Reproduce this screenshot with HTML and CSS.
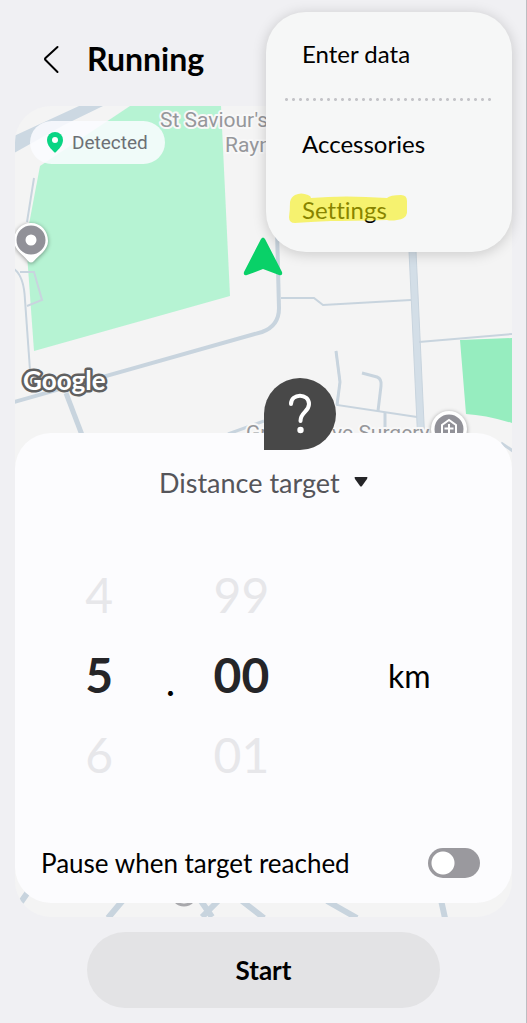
FILE: index.html
```html
<!DOCTYPE html>
<html lang="en">
<head>
    <meta charset="UTF-8">
    <meta name="viewport" content="width=device-width, initial-scale=1.0">
    <title>Running</title>
    <link rel="stylesheet" href="styles.css">
</head>
<body>
    <header class="header">
        <button class="back-button" aria-label="Back">
            <svg width="18" height="30" viewBox="0 0 18 30">
                <path d="M15.500 3L3.500 14Q2.500 15 3.500 16L15.500 28" fill="none" stroke="#000" stroke-width="2" stroke-linecap="round"/>
            </svg>
        </button>
        <h1>Running</h1>
    </header>

    <nav class="menu" aria-label="More options">
        <button class="menu-item">Enter data</button>
        <div class="menu-divider"></div>
        <button class="menu-item">Accessories</button>
        <button class="menu-item">Settings
            <svg class="highlight" width="118" height="32" viewBox="0 0 118 32">
                <path d="M6 2Q12 -1 19 2Q22 3 22 5Q55 2 98 5Q101 2 112 2Q118 2 118 8V20Q117 26 108 27Q102 28 98 27Q60 28 42 28Q20 29 6 30Q0 30 0 24Q1 17 1 9Q2 4 6 2Z" fill="#f5ee00" fill-opacity="0.55"/>
            </svg>
        </button>
    </nav>

    <main>
        <section class="map">
            <svg class="map-canvas" viewBox="15 106 497 811" preserveAspectRatio="xMidYMin slice">
                <rect x="14" y="106" width="498" height="811" fill="#f4f4f4"/>

                <!-- water / main road top left -->
                <path d="M14 136L79 106H103L64 125L14 153Z" fill="#ccd8e2"/>

                <!-- parks -->
                <path d="M130 106H221L230 296L34 351L26 240L40 166Z" fill="#b6f3d3"/>
                <path d="M460 340L512 338V423Q485 415 466 414Z" fill="#96edbf"/>

                <!-- roads -->
                <g fill="none" stroke="#c8d4de">
                    <path d="M34 178L27 222M14 269Q24 276 25 300L30 370" stroke-width="2"/>
                    <path d="M20 272H34L42 300L27 306" stroke-width="2"/>
                    <path d="M14 402L262 332Q279 326 279 308L277 230" stroke-width="4"/>
                    <path d="M66 393L82 435" stroke-width="5"/>
                    <path d="M412 240L421 434" stroke="#d3dee7" stroke-width="7"/>
                    <path d="M408.500 240L417.500 434M415.500 240L424.500 434" stroke-width="1"/>
                    <path d="M281 298H314L323 305L411 300" stroke-width="2"/>
                    <path d="M419 342L512 334" stroke-width="2"/>
                    <path d="M336 351L340 382L337 405L417 417" stroke-width="2"/>
                    <path d="M336 351L340 382L337 405" stroke-width="3"/>
                    <path d="M362 373L377 377Q382 379 381 386L378 411" stroke-width="3"/>
                    <path d="M385 412V434M228 434L264 421" stroke-width="3"/>
                    <path d="M501 443L513 451" stroke-width="3"/>
                    <path d="M21 902L28 892M108 918L124 899M201 901L212 917M202 917L220 899M242 901L264 918M327 901L357 918M441 900L445 918" stroke-width="6"/>
                </g>

                <!-- labels -->
                <g class="map-label">
                    <text x="160" y="127">St Saviour's</text>
                    <text x="225" y="152">Raynes</text>
                    <text x="246" y="440">Grove</text>
                    <text x="332" y="440">ve Surgery</text>
                </g>
                <text class="google" x="23" y="390">Google</text>

                <!-- place pins -->
                <path d="M31 223C21 223 14 231 14 241C14 250 24 255 28 261Q31 264 34 261C39 255 48 250 48 241C48 231 41 223 31 223Z" fill="#fff" class="pin-shadow"/>
                <circle cx="31" cy="240" r="10" fill="#fff" stroke="#919198" stroke-width="9"/>
                <circle cx="449" cy="429" r="18" fill="#fff" class="pin-shadow"/>
                <circle cx="449" cy="429" r="14.500" fill="#919198"/>
                <path d="M442 436V425L449 420L456 425V436ZM449 424V433M444.500 428.500H453.500" fill="none" stroke="#fff" stroke-width="2"/>
                <circle cx="184" cy="893" r="12" fill="#fff" stroke="#a8a8ac" stroke-width="3"/>

                <!-- current position -->
                <path d="M261 239Q263 236 265 239L282 272Q283 276 279 275L263 269L247 275Q243 276 244 272Z" fill="#09d168"/>
            </svg>

            <div class="status">
                <svg width="16" height="21" viewBox="0 0 16 21">
                    <path d="M8 0A8 8 0 0 0 0 8C0 13 4 17 7 20Q8 21 9 20C12 17 16 13 16 8A8 8 0 0 0 8 0Z" fill="#09d584"/>
                    <circle cx="8" cy="8" r="3" fill="#fff"/>
                </svg>
                Detected
            </div>

            <form class="sheet">
                <button type="button" class="help-button" aria-label="Help">
                    <svg width="24" height="42" viewBox="0 0 24 42">
                        <path d="M3 11C3 0 21 0 21 11C21 19 12.500 19 12.500 28" fill="none" stroke="#fff" stroke-width="4" stroke-linecap="round"/>
                        <circle cx="12.500" cy="37" r="3.200" fill="#fff"/>
                    </svg>
                </button>

                <div class="target">
                    <select class="target-select" aria-label="Target type">
                        <option>Distance target</option>
                    </select>
                    <svg width="14" height="10" viewBox="0 0 14 10">
                        <path d="M1 0H13Q14 0 13 2L8 9Q7 10 6 9L1 2Q0 0 1 0Z" fill="#252528"/>
                    </svg>
                </div>

                <div class="picker">
                    <div class="picker-column">
                        <button type="button" class="picker-option">4</button>
                        <output class="picker-value">5</output>
                        <button type="button" class="picker-option">6</button>
                    </div>
                    <span class="picker-point">.</span>
                    <div class="picker-column">
                        <button type="button" class="picker-option">99</button>
                        <output class="picker-value">00</output>
                        <button type="button" class="picker-option">01</button>
                    </div>
                    <span class="picker-unit">km</span>
                </div>

                <div class="pause">
                    <label for="pauseToggle">Pause when target reached</label>
                    <input type="checkbox" id="pauseToggle" class="toggle">
                </div>
            </form>
        </section>

        <button class="start-button">Start</button>
    </main>
</body>
</html>
```
FILE: styles.css
```css
* {
    box-sizing: border-box;
}

body {
    position: relative;
    margin: 0;
    min-height: 100vh;
    padding: 0 14px 15px 15px;
    background: #f0f0f3;
    border-right: 1px solid #bdbdc1;
    font-family: Lato, "Liberation Sans", sans-serif;
    font-size: 24px;
    font-variant-ligatures: none;
    color: #000;
}

button,
select {
    margin: 0;
    padding: 0;
    border: none;
    background: none;
    font: inherit;
    font-variant-ligatures: none;
    color: inherit;
    cursor: pointer;
}

.header {
    display: flex;
    align-items: center;
    gap: 27px;
    height: 106px;
    padding: 12px 0 0 27px;
}

.header h1 {
    margin: 0;
    font-size: 32px;
    line-height: 40px;
    font-weight: 700;
}

.back-button {
    display: flex;
}

/* Menu */
.menu {
    position: absolute;
    z-index: 2;
    top: 12px;
    right: 14px;
    display: flex;
    flex-direction: column;
    width: 246px;
    padding: 9px 0;
    border-radius: 40px;
    background: #f6f7f7;
    box-shadow: 0 2px 14px rgba(0, 0, 0, 0.18);
}

.menu-item {
    position: relative;
    padding-left: 36px;
    line-height: 66px;
    text-align: left;
}

.menu-divider {
    height: 3px;
    margin: 11px 17px 10px;
    background: radial-gradient(circle, #c4c4c8 1px, transparent 2px) 0 0 / 7px 3px;
}

.highlight {
    position: absolute;
    left: 23px;
    top: 16px;
}

/* Map */
.map {
    position: relative;
    display: flex;
    flex-direction: column;
    align-items: flex-start;
    padding: 15px 0 14px;
    border-radius: 36px;
    overflow: hidden;
}

.map-canvas {
    position: absolute;
    inset: 0;
    width: 100%;
    height: 100%;
}

.map-label {
    font-family: Roboto, sans-serif;
    font-size: 21px;
    fill: #96979b;
    stroke: #f8f8f8;
    stroke-width: 4px;
    stroke-linejoin: round;
    paint-order: stroke;
}

.google {
    font-family: Lato, sans-serif;
    font-size: 26px;
    font-weight: 700;
    fill: #fff;
    stroke: #606060;
    stroke-width: 5px;
    stroke-linejoin: round;
    paint-order: stroke;
}

.pin-shadow {
    filter: drop-shadow(0 1px 2px rgba(0, 0, 0, 0.4));
}

.status {
    position: relative;
    display: flex;
    align-items: center;
    gap: 9px;
    height: 43px;
    margin-left: 15px;
    padding: 0 17px;
    border-radius: 22px;
    background: rgba(250, 252, 255, 0.85);
    font-family: Roboto, sans-serif;
    font-size: 19px;
    color: #6c7075;
}

/* Target sheet */
.sheet {
    position: relative;
    width: 100%;
    margin-top: 269px;
    padding: 29px 0 20px;
    border-radius: 36px;
    background: #fcfcfe;
}

.help-button {
    position: absolute;
    top: -55px;
    left: 50%;
    display: flex;
    align-items: center;
    justify-content: center;
    width: 72px;
    height: 72px;
    border-radius: 36px 36px 36px 0;
    background: #484848;
}

.target {
    display: flex;
    align-items: center;
    justify-content: center;
    gap: 14px;
    height: 40px;
}

.target-select {
    appearance: none;
    font-size: 27px;
    color: #55555a;
}

.picker {
    display: grid;
    grid-template-columns: 29fr 7fr 29fr 54fr;
    align-items: center;
    margin-top: 53px;
    padding-left: 27px;
    text-align: center;
}

.picker-column {
    display: flex;
    flex-direction: column;
    font-size: 48px;
    line-height: 80px;
}

.picker-option {
    color: #e7e7ea;
}

.picker-value {
    font-weight: 700;
    color: #252528;
}

.picker-point {
    padding-top: 12px;
    font-size: 40px;
    line-height: 80px;
}

.picker-unit {
    padding-left: 8px;
    font-size: 32px;
}

.pause {
    display: flex;
    align-items: center;
    justify-content: space-between;
    height: 40px;
    margin-top: 48px;
    padding: 0 32px 0 26px;
    font-size: 26px;
}

.toggle {
    appearance: none;
    width: 52px;
    height: 30px;
    margin: 0;
    border-radius: 15px;
    background: radial-gradient(circle at 15px 15px, #fff 11px, transparent 12px) #9a999e;
    cursor: pointer;
}

.toggle:checked {
    background: radial-gradient(circle at 37px 15px, #fff 11px, transparent 12px) #09d168;
}

.start-button {
    display: block;
    width: 71%;
    height: 76px;
    margin: 15px auto 0;
    border-radius: 38px;
    background: #e3e3e5;
    font-size: 26px;
    font-weight: 700;
}
```
